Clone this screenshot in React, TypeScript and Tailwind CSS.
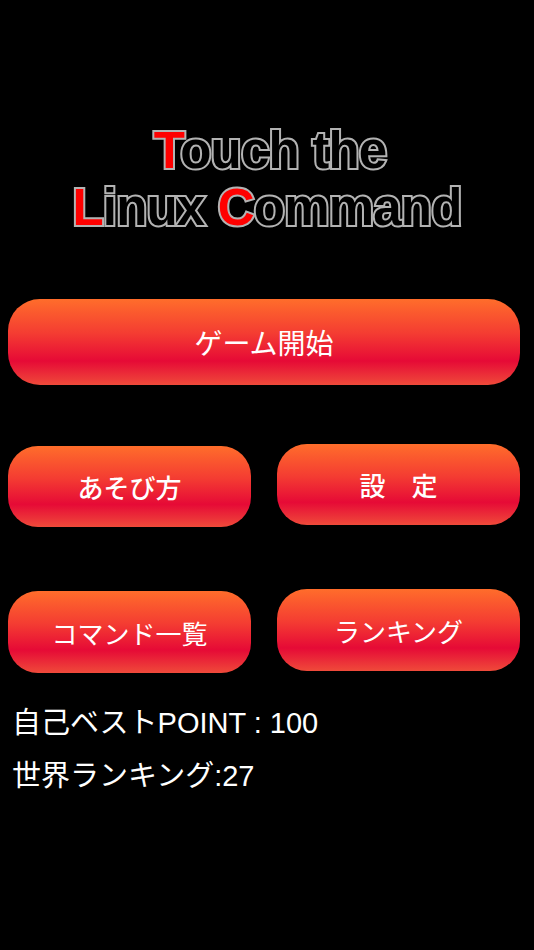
import React from "react";

const btn =
  "flex items-center justify-center text-white bg-[linear-gradient(to_bottom,#ff6d2b_0%,#f43c32_40%,#e60a36_72%,#ef4a3a_100%)]";

const titleStroke =
  "[-webkit-text-stroke:4px_#b3b3b3] [paint-order:stroke_fill]";

export default function App() {
  return (
    <div className="w-[534px] h-[950px] bg-black overflow-hidden font-['Liberation_Sans','Noto_Sans_CJK_JP',sans-serif]">
      <div className="pt-[122px] flex flex-col items-center font-['Liberation_Sans',sans-serif] font-bold text-[51px] leading-[57px] tracking-[-0.8px]">
        <div className={`${titleStroke} text-black ml-[6px]`}>
          <span className="text-[#ff0000]">T</span>ouch the
        </div>
        <div className={`${titleStroke} text-black`}>
          <span className="text-[#ff0000]">L</span>inux <span className="text-[#ff0000]">C</span>ommand
        </div>
      </div>

      <div className="pl-[8px] pr-[14px] mt-[63px]">
        <div className={`${btn} h-[86px] rounded-[32px] text-[28px] font-['Noto_Sans_CJK_JP',sans-serif] font-normal`}>
          ゲーム開始
        </div>

        <div className="grid grid-cols-2 gap-[26px] mt-[59px] items-start">
          <div className={`${btn} h-[81px] mt-[2px] rounded-[30px] text-[26px] font-['Noto_Sans_CJK_JP',sans-serif] font-medium`}>
            あそび方
          </div>
          <div className={`${btn} h-[81px] rounded-[30px] text-[26px] font-['Noto_Sans_CJK_JP',sans-serif] font-medium`}>
            設<span className="inline-block w-[26px]" />定
          </div>
        </div>

        <div className="grid grid-cols-2 gap-[26px] mt-[62px] items-start">
          <div className={`${btn} h-[82px] mt-[2px] rounded-[30px] text-[26px] font-['Noto_Sans_CJK_JP',sans-serif] font-normal`}>
            コマンド一覧
          </div>
          <div className={`${btn} h-[82px] rounded-[30px] text-[26px] font-['Noto_Sans_CJK_JP',sans-serif] font-normal`}>
            ランキング
          </div>
        </div>
      </div>

      <div className="pl-[12px] mt-[24px] text-white text-[29px] leading-[53px]">
        <div>自己ベストPOINT : 100</div>
        <div>世界ランキング:27</div>
      </div>
    </div>
  );
}
